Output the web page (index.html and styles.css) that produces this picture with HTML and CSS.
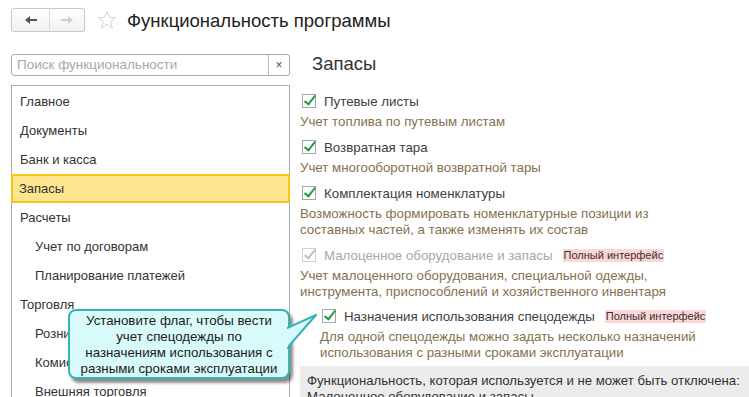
FILE: index.html
```html
<!DOCTYPE html>
<html lang="ru">
<head>
  <meta charset="UTF-8">
  <title>Функциональность программы</title>
  <link rel="stylesheet" href="styles.css">
</head>
<body>

  <div class="header">
    <div class="nav">
      <span class="nav-btn back">
        <svg width="14" height="10" viewBox="0 0 14 10"><path d="M1 5 L6 1 L6 4 L13 4 L13 6 L6 6 L6 9 Z" fill="#555"/></svg>
      </span>
      <span class="nav-btn fwd">
        <svg width="14" height="10" viewBox="0 0 14 10"><path d="M13 5 L8 1 L8 4 L1 4 L1 6 L8 6 L8 9 Z" fill="#cfcfcf"/></svg>
      </span>
    </div>
    <svg class="star" width="20" height="20" viewBox="0 0 20 20">
      <polygon points="10,1.5 12.4,7.4 18.6,7.6 13.7,11.6 15.4,17.8 10,14.2 4.6,17.8 6.3,11.6 1.4,7.6 7.6,7.4" fill="none" stroke="#d4d4d4" stroke-width="1"/>
    </svg>
    <div class="title">Функциональность программы</div>
  </div>

  <div class="main">
    <div class="left">
      <div class="search">
        <span class="search-text">Поиск функциональности</span>
        <span class="search-clear">×</span>
      </div>
      <div class="list">
        <div class="item">Главное</div>
        <div class="item">Документы</div>
        <div class="item">Банк и касса</div>
        <div class="item selected">Запасы</div>
        <div class="item">Расчеты</div>
        <div class="item sub">Учет по договорам</div>
        <div class="item sub">Планирование платежей</div>
        <div class="item">Торговля</div>
        <div class="item sub">Розничная торговля</div>
        <div class="item sub">Комиссионная торговля</div>
        <div class="item sub">Внешняя торговля</div>
      </div>
    </div>

    <div class="right">
      <h2 class="section-title">Запасы</h2>

      <div class="option first">
        <div class="label"><span class="check on"></span>Путевые листы</div>
        <div class="desc">Учет топлива по путевым листам</div>
      </div>

      <div class="option">
        <div class="label"><span class="check on"></span>Возвратная тара</div>
        <div class="desc">Учет многооборотной возвратной тары</div>
      </div>

      <div class="option">
        <div class="label"><span class="check on"></span>Комплектация номенклатуры</div>
        <div class="desc">Возможность формировать номенклатурные позиции из<br>составных частей, а также изменять их состав</div>
      </div>

      <div class="option">
        <div class="label disabled"><span class="check off"></span>Малоценное оборудование и запасы<span class="tag">Полный интерфейс</span></div>
        <div class="desc">Учет малоценного оборудования, специальной одежды,<br>инструмента, приспособлений и хозяйственного инвентаря</div>
      </div>

      <div class="option nested">
        <div class="label"><span class="check on"></span>Назначения использования спецодежды<span class="tag">Полный интерфейс</span></div>
        <div class="desc">Для одной спецодежды можно задать несколько назначений<br>использования с разными сроками эксплуатации</div>
      </div>

      <div class="used">
        <div>Функциональность, которая используется и не может быть отключена:</div>
        <div>Малоценное оборудование и запасы</div>
      </div>
    </div>
  </div>

  <div class="callout">
    Установите флаг, чтобы вести<br>учет спецодежды по<br>назначениям использования с<br>разными сроками эксплуатации
    <svg class="callout-tail" width="34" height="36" viewBox="0 0 34 36">
      <polygon points="0,14 29,1 0,34" fill="#d8fafa" stroke="#35b3b3" stroke-width="2" stroke-linejoin="round"/>
      <rect x="-2" y="15" width="3" height="18" fill="#d8fafa"/>
    </svg>
  </div>

</body>
</html>
```

FILE: styles.css
```css
body {
  margin: 0;
  font-family: "Liberation Sans", Arial, sans-serif;
  font-size: 13px;
  color: #333;
  background: #fff;
  overflow: hidden;
  height: 397px;
  position: relative;
}
.header {
  display: flex;
  align-items: center;
  height: 40px;
  padding-left: 11px;
}
.nav {
  display: flex;
  height: 24px;
}
.nav-btn {
  width: 37px;
  height: 22px;
  border: 1px solid #c9c9c9;
  background: linear-gradient(#ffffff, #f1f1f1);
  display: flex;
  align-items: center;
  justify-content: center;
}
.back {
  border-radius: 3px 0 0 3px;
}
.fwd {
  width: 34px;
  border-left: 1px solid #dcdcdc;
  border-radius: 0 3px 3px 0;
  margin-left: -1px;
}
.star {
  margin-left: 12px;
}
.title {
  margin-left: 10px;
  font-size: 18.5px;
  color: #222;
  margin-top: 1px;
}
.main {
  display: flex;
}
.left {
  width: 279px;
  margin-left: 11px;
  padding-top: 14px;
}
.search {
  display: flex;
  height: 20px;
  border: 1px solid #aaa;
  border-radius: 3px;
}
.search-text {
  flex: 1;
  color: #a8a8a8;
  font-size: 13.5px;
  line-height: 20px;
  padding-left: 5px;
}
.search-clear {
  width: 20px;
  border-left: 1px solid #bbb;
  text-align: center;
  line-height: 20px;
  color: #555;
  font-size: 12px;
}
.list {
  margin-top: 9px;
  border: 1px solid #aaa;
  height: 320px;
  padding-top: 1px;
}
.item {
  height: 29px;
  line-height: 29px;
  padding-left: 8px;
  color: #333;
}
.item.sub {
  padding-left: 23px;
}
.item.selected {
  background: #fde48e;
  border: 2px solid #f5c518;
  height: 25px;
  line-height: 25px;
  padding-left: 6px;
  margin: 0 -1px;
}
.right {
  margin-left: 10px;
  flex: 1;
  font-size: 13.3px;
}
.section-title {
  margin: 13px 0 0;
  font-weight: normal;
  font-size: 18.5px;
  color: #333;
  padding-left: 12px;
  line-height: 22px;
}
.option {
  margin-top: 8px;
}
.option.first {
  margin-top: 17px;
}
.option.nested {
  padding-left: 20px;
  margin-top: 7px;
}
.label {
  display: flex;
  align-items: center;
  height: 18px;
  color: #404040;
}
.label.disabled {
  color: #a8a8a8;
}
.check {
  width: 12px;
  height: 12px;
  border: 1px solid #a6a6a6;
  background: #fff;
  margin: 0 8px 0 2px;
  position: relative;
}
.check::after {
  content: "";
  position: absolute;
  left: 4px;
  top: -2px;
  width: 4px;
  height: 10px;
  border-right: 2.5px solid #1c9a3e;
  border-bottom: 2.5px solid #1c9a3e;
  transform: rotate(38deg);
}
.check.off {
  border-color: #cfcfcf;
}
.check.off::after {
  border-color: #bdbdbd;
}
.tag {
  margin-left: 10px;
  background: #fcd6d6;
  color: #333;
  font-size: 11px;
  padding: 0 1px;
  line-height: 13px;
}
.desc {
  margin-top: 4px;
  color: #85714f;
  line-height: 16px;
}
.used {
  margin-top: 5px;
  background: #ececec;
  padding: 7px 7px;
  color: #333;
  font-size: 13.2px;
  line-height: 16px;
  white-space: nowrap;
}
.callout {
  position: absolute;
  left: 68px;
  top: 309px;
  width: 218px;
  height: 64px;
  border: 2px solid #35b3b3;
  border-radius: 8px;
  background: #d8fafa;
  box-shadow: 3px 4px 3px rgba(0,0,0,0.45);
  text-align: center;
  font-size: 13.3px;
  line-height: 16px;
  color: #1a1a1a;
  padding-top: 2px;
}
.callout-tail {
  position: absolute;
  left: 217px;
  top: 3px;
}
```
